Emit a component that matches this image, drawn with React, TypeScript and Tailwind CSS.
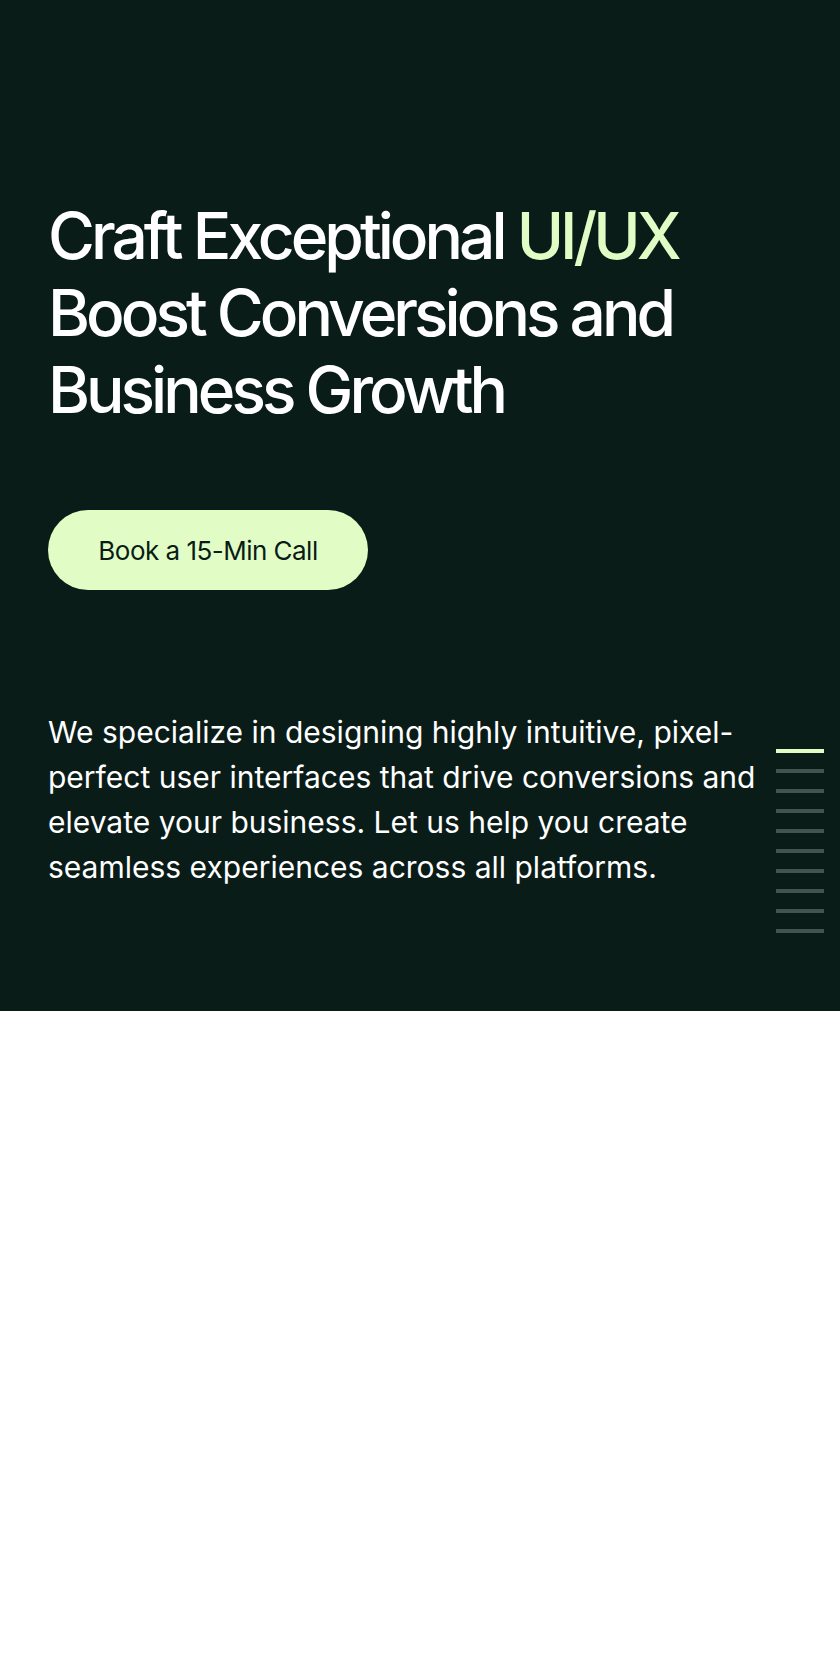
const slides = Array.from({ length: 10 }, (_, i) => i);

export default function App() {
  return (
    <div className="min-h-[1680px] bg-white font-['Inter',sans-serif]">
      <section className="bg-[#0a1c18] pl-12 pr-4 pt-[198px] pb-[78px]">
        <h1 className="text-[64px] leading-[1.2] font-medium tracking-[-0.062em] text-white">
          Craft Exceptional <span className="text-[#e2fcc5]">UI/UX</span>
          <br />
          Boost Conversions and
          <br />
          Business Growth
        </h1>

        <button className="mt-[82px] h-20 w-[320px] rounded-full bg-[#e2fcc5] text-[26px] tracking-[-0.02em] text-[#0a1c18]">
          Book a 15-Min Call
        </button>

        <div className="mt-[120px] flex items-start gap-4">
          <p className="flex-1 text-[30px] leading-[1.5] text-white">
            We specialize in designing highly intuitive, pixel-perfect user
            interfaces that drive conversions and elevate your business. Let us
            help you create seamless experiences across all platforms.
          </p>
          {/* slide pager */}
          <div className="mt-[39px] flex w-12 flex-col gap-4">
            {slides.map((i) => (
              <span
                key={i}
                className={
                  i === 0 ? "h-1 w-12 bg-[#e2fcc5]" : "h-1 w-12 bg-[#42544f]"
                }
              />
            ))}
          </div>
        </div>
      </section>
    </div>
  );
}
